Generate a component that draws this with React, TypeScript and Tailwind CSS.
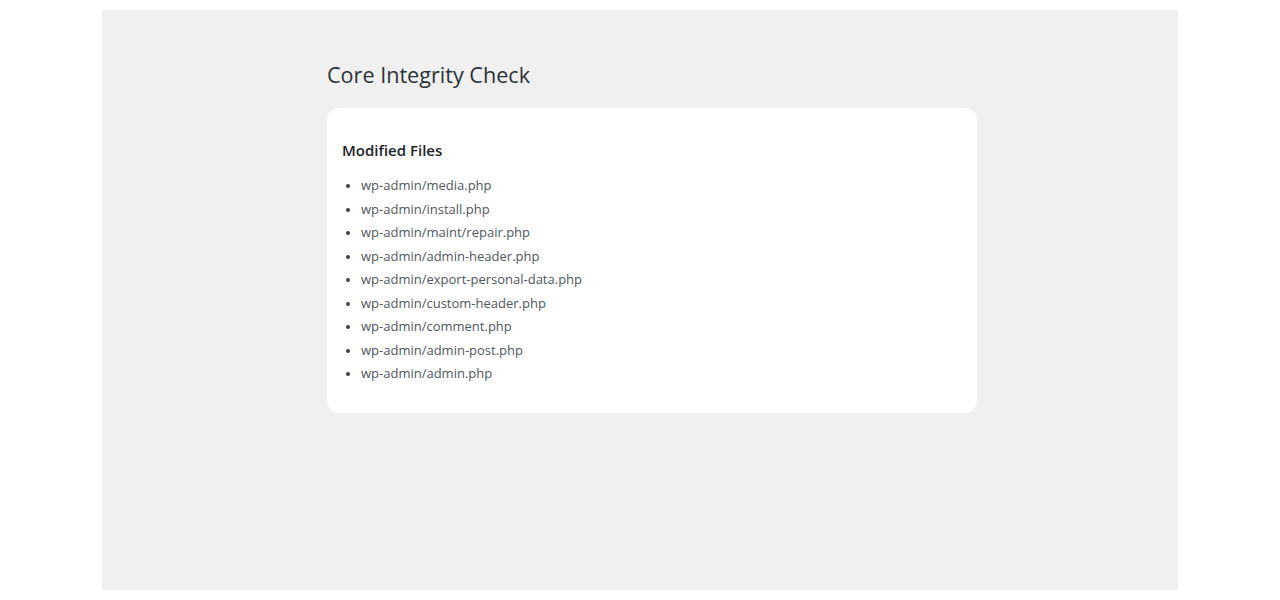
const files = [
  "wp-admin/media.php",
  "wp-admin/install.php",
  "wp-admin/maint/repair.php",
  "wp-admin/admin-header.php",
  "wp-admin/export-personal-data.php",
  "wp-admin/custom-header.php",
  "wp-admin/comment.php",
  "wp-admin/admin-post.php",
  "wp-admin/admin.php",
];

export default function App() {
  return (
    <div className="min-h-[600px] bg-white pt-[10px] font-['Open_Sans',sans-serif]">
      <div className="ml-[102px] h-[580px] w-[1076px] bg-[#f0f0f0] pl-[225px] pt-[50px]">
        <h1 className="text-[21.6px] leading-[30px] text-[#2c3338]">Core Integrity Check</h1>
        <div className="mt-[18px] w-[650px] rounded-xl bg-white px-[15px] pb-[27px] pt-[32px]">
          <h2 className="text-[15px] font-semibold leading-5 text-[#1d2327]">Modified Files</h2>
          <ul className="mt-[14px] list-disc pl-[19px] text-[13px] leading-[23.5px] text-[#50575e] marker:text-[11px] marker:text-[#3c434a]">
            {files.map((f) => (
              <li key={f}>{f}</li>
            ))}
          </ul>
        </div>
      </div>
    </div>
  );
}
